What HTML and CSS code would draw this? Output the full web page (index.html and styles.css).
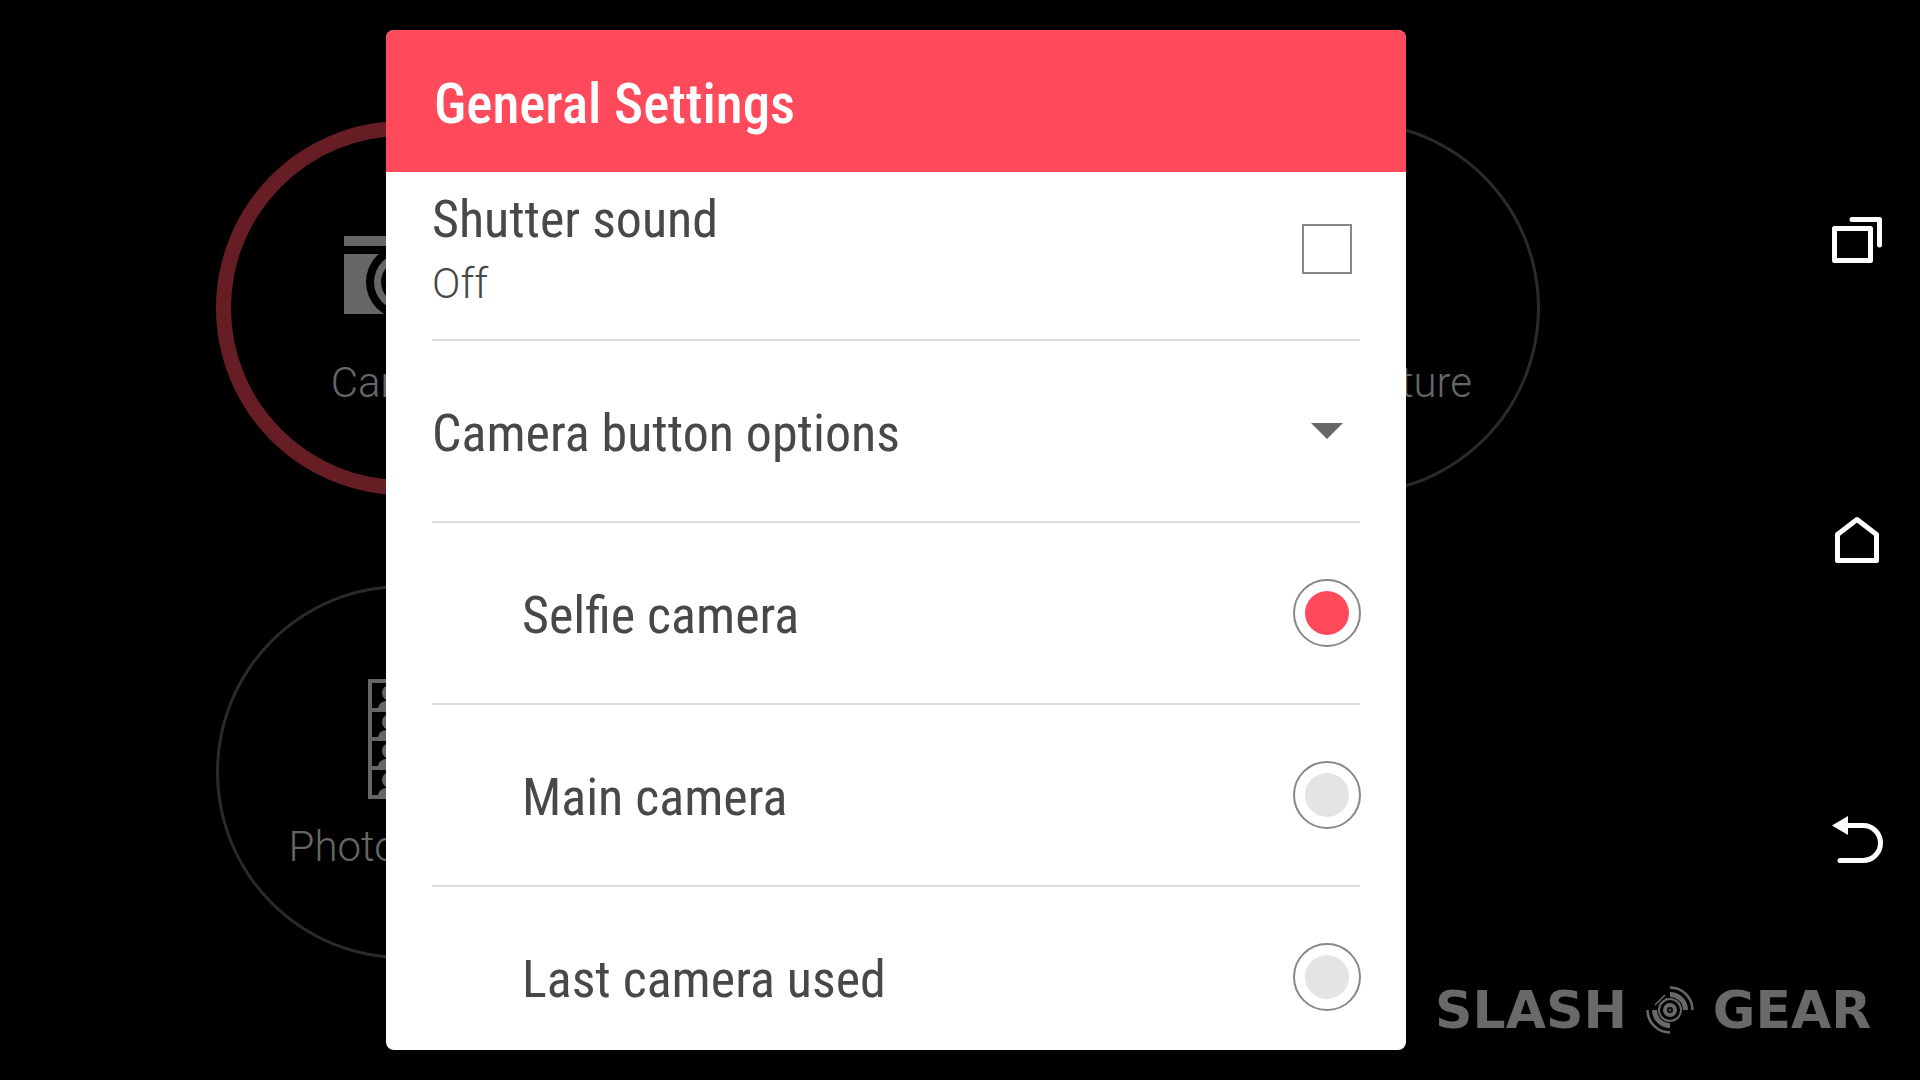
FILE: index.html
```html
<!DOCTYPE html>
<html lang="en">
  <head>
    <meta charset="UTF-8" />
    <meta name="viewport" content="width=device-width, initial-scale=1.0" />
    <title>General Settings</title>
    <link rel="stylesheet" href="styles.css" />
  </head>
  <body>
    <div class="screen">
      <main class="stage">
        <!-- Camera modes behind the dialog -->
        <div class="modes">
          <div class="mode active">
            <svg class="mode-icon" viewBox="0 0 120 120">
              <path d="M1 21h118v10H1z" />
              <path d="M1 39h118v60H1z" />
              <circle class="cut" cx="60" cy="67" r="37" />
              <circle cx="60" cy="67" r="29" />
              <circle class="cut" cx="60" cy="67" r="22" />
            </svg>
            <span>Camera</span>
          </div>
          <div class="mode">
            <svg class="mode-icon" viewBox="0 0 120 120">
              <path d="M10 30h46v60H10zM64 30h46v60H64z" />
            </svg>
            <span>Dual Capture</span>
          </div>
          <div class="mode">
            <svg class="mode-icon" viewBox="0 0 120 120">
              <path class="frame" d="M27 2h66v116H27zM27 31h66M27 60h66M27 89h66" />
              <g id="sitters">
                <circle cx="47" cy="14" r="8" />
                <circle cx="73" cy="14" r="8" />
                <path d="M35 31v-2q1-6 8-7h8q7 1 8 7v2zM61 31v-2q1-6 8-7h8q7 1 8 7v2z" />
              </g>
              <use href="#sitters" y="29" />
              <use href="#sitters" y="58" />
              <use href="#sitters" y="87" />
            </svg>
            <span>Photo Booth</span>
          </div>
        </div>

        <!-- Settings dialog -->
        <section class="dialog">
          <header class="dialog-header">
            <h1>General Settings</h1>
          </header>
          <form class="settings">
            <label class="row">
              <span class="row-text">
                <span class="title">Shutter sound</span>
                <span class="value">Off</span>
              </span>
              <span class="control"><input type="checkbox" class="checkbox" /></span>
            </label>
            <button type="button" class="row" aria-expanded="true">
              <span class="title">Camera button options</span>
              <span class="control"><span class="caret"></span></span>
            </button>
            <label class="row option">
              <span class="title">Selfie camera</span>
              <input type="radio" class="radio" name="camera" checked />
            </label>
            <label class="row option">
              <span class="title">Main camera</span>
              <input type="radio" class="radio" name="camera" />
            </label>
            <label class="row option">
              <span class="title">Last camera used</span>
              <input type="radio" class="radio" name="camera" />
            </label>
          </form>
        </section>
      </main>

      <!-- Navigation bar -->
      <nav class="navbar">
        <button type="button" aria-label="Recent apps">
          <svg viewBox="-2 -2 56 56">
            <path d="M4.5 14.5h36v32h-36zM22 5.5h27.5V31" />
          </svg>
        </button>
        <button type="button" aria-label="Home">
          <svg viewBox="-2 -2 56 56">
            <path d="M7.5 46.5v-26L27 5.5l19.5 15v26z" />
          </svg>
        </button>
        <button type="button" aria-label="Back">
          <svg viewBox="-2 -2 56 56">
            <path d="M17 11.5h16a17.5 17.5 0 0 1 0 35H10" />
            <path class="solid" d="M2 11.5L18 2v19z" />
          </svg>
        </button>
      </nav>

      <div class="watermark">
        <span class="slash">SLASH</span>
        <svg viewBox="0 0 48 48">
          <circle cx="24" cy="24" r="5" stroke-width="4" />
          <circle cx="24" cy="24" r="1" stroke-width="1" />
          <circle cx="24" cy="24" r="11" stroke-width="2" />
          <path stroke-width="5" d="M24 8.5A15.5 15.5 0 0 1 39.5 24M8.5 24A15.5 15.5 0 0 0 24 39.5" />
          <path stroke-width="2.5" d="M24 1.5A22.5 22.5 0 0 1 46.5 24M1.5 24A22.5 22.5 0 0 0 24 46.5" />
          <path stroke-width="1.5" d="M9 19L19 9M14 19l7-7" />
        </svg>
        <span class="gear">GEAR</span>
      </div>
    </div>
  </body>
</html>
```
FILE: styles.css
```css
* {
  box-sizing: border-box;
}
body {
  margin: 0;
  background: #000;
  font-family: Roboto, sans-serif;
}
button {
  margin: 0;
  padding: 0;
  border: none;
  background: none;
  font: inherit;
  cursor: pointer;
}
.screen {
  position: relative;
  display: flex;
  height: 100vh;
  overflow: hidden;
}
.stage {
  position: relative;
  flex: 1;
  display: flex;
  justify-content: center;
  padding: 30px 0;
}

/* camera modes */
.modes {
  position: absolute;
  top: 121px;
  left: 216px;
  right: 252px;
  display: grid;
  grid-template-columns: 374px 374px;
  justify-content: space-between;
  row-gap: 90px;
}
.mode {
  display: flex;
  flex-direction: column;
  align-items: center;
  gap: 23px;
  height: 374px;
  padding-top: 94px;
  border-radius: 50%;
  box-shadow: inset 0 0 0 3px #2a2a2a;
  color: #666;
  font-size: 42px;
  font-weight: 300;
  line-height: 50px;
}
.mode.active {
  box-shadow: inset 0 0 0 15px #661d23;
}
.mode-icon {
  width: 120px;
  height: 120px;
  fill: #666;
}
.mode-icon .cut {
  fill: #000;
}
.mode-icon .frame {
  fill: none;
  stroke: #666;
  stroke-width: 4;
}

/* dialog */
.dialog {
  position: relative;
  display: flex;
  flex-direction: column;
  width: 1020px;
  max-width: 100%;
  background: #fff;
  border-radius: 8px;
  overflow: hidden;
}
.dialog-header {
  position: relative;
  z-index: 1;
  flex: none;
  padding: 40px 48px 34px;
  background: #ff4a5b;
}
h1 {
  margin: 0;
  color: #fff;
  font-family: "Roboto Condensed", Roboto, sans-serif;
  font-size: 55px;
  font-weight: 500;
  line-height: 68px;
}
.settings {
  margin-top: -13px;
  padding: 0 46px;
}
.row {
  display: flex;
  align-items: center;
  justify-content: space-between;
  width: 100%;
  height: 182px;
  border-bottom: 2px solid #dcdcdc;
  text-align: left;
  cursor: pointer;
}
.row.option {
  padding-left: 90px;
}
.row-text {
  display: flex;
  flex-direction: column;
}
.title {
  padding-top: 6px;
  color: #484848;
  font-family: "Roboto Condensed", Roboto, sans-serif;
  font-size: 52px;
  font-weight: 400;
  line-height: 64px;
}
.value {
  color: #484848;
  font-size: 42px;
  font-weight: 300;
  line-height: 64px;
}
.control {
  display: flex;
  justify-content: center;
  width: 66px;
}
.checkbox {
  appearance: none;
  width: 50px;
  height: 50px;
  margin: 0;
  border: 2px solid #888;
  background: #fff;
}
.checkbox:checked {
  background: #ff4a5b;
}
.caret {
  border: 16px solid transparent;
  border-top-color: #666;
  border-bottom: none;
}
.radio {
  appearance: none;
  width: 68px;
  height: 68px;
  margin: 0 -1px 0 0;
  padding: 10px;
  border: 2px solid #888;
  border-radius: 50%;
  background: #e6e3e7 content-box;
}
.radio:checked {
  background-color: #ff4a5b;
}

/* navigation bar */
.navbar {
  display: flex;
  flex-direction: column;
  width: 128px;
  padding: 90px 0;
}
.navbar button {
  flex: 1;
  display: flex;
  align-items: center;
  justify-content: center;
}
.navbar svg {
  width: 56px;
  height: 56px;
  fill: none;
  stroke: #fff;
  stroke-width: 5;
  stroke-linecap: round;
  stroke-linejoin: round;
}
.navbar .solid {
  fill: #fff;
  stroke: none;
}

/* watermark */
.watermark {
  position: absolute;
  right: 38px;
  bottom: 42px;
  display: flex;
  align-items: center;
  gap: 8px;
  color: #696969;
  font-family: "DejaVu Sans", sans-serif;
  font-size: 52px;
  font-weight: 700;
  line-height: 56px;
  text-align: center;
  pointer-events: none;
}
.watermark svg {
  width: 48px;
  height: 48px;
  fill: none;
  stroke: #696969;
}
.slash {
  width: 214px;
}
.gear {
  width: 180px;
}
```
